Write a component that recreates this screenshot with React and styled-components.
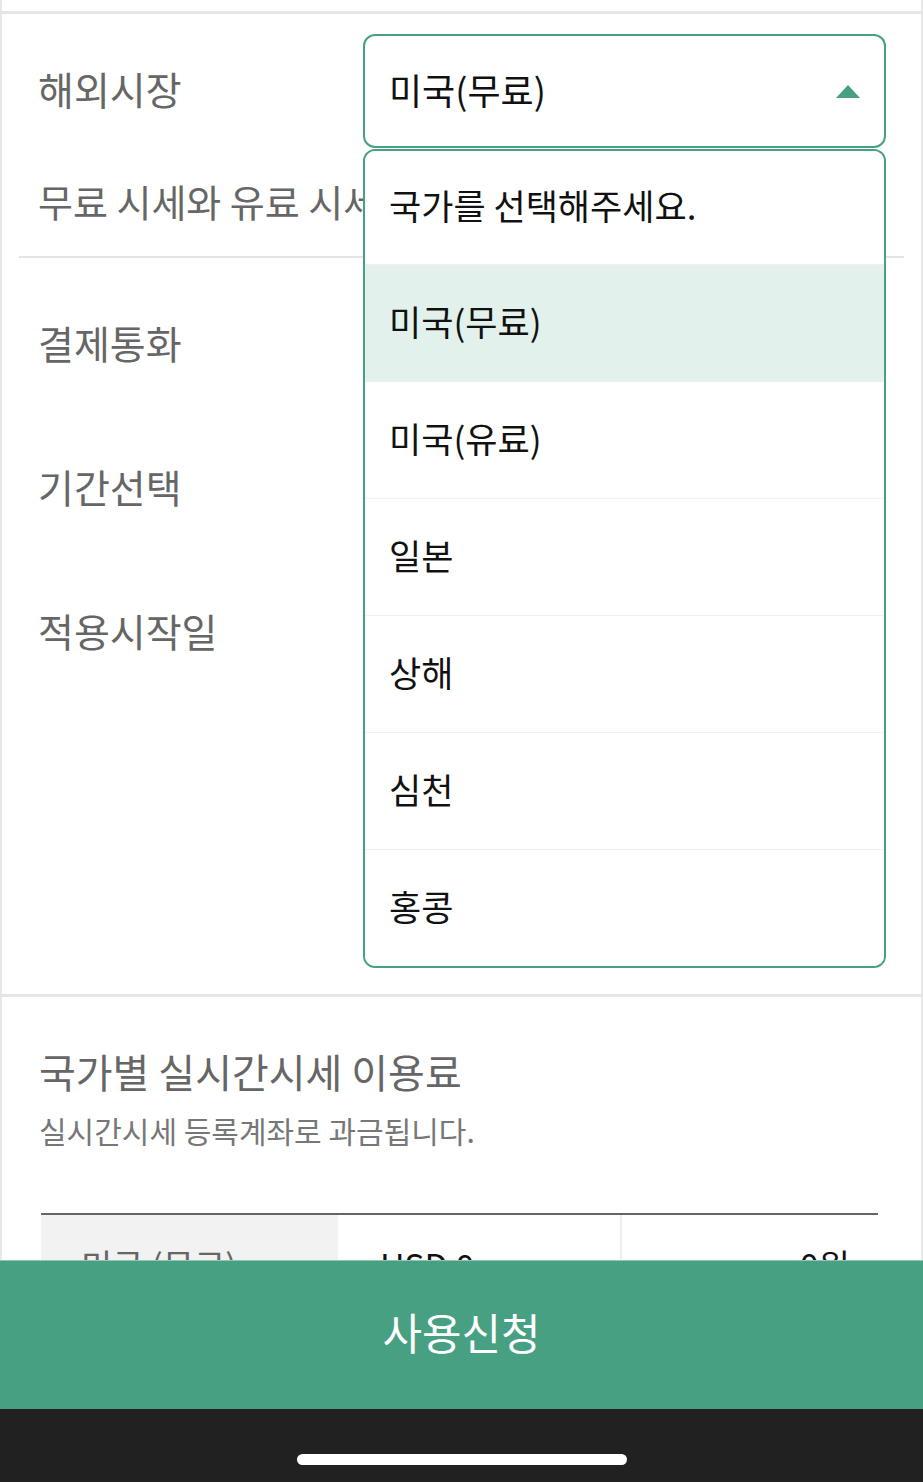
import styled, { createGlobalStyle } from "styled-components";

// Estilos globais
const GlobalStyle = createGlobalStyle`
    html, body {
        margin: 0;
        padding: 0;
        background: #fff;
    }
    body {
        font-family: "Noto Sans CJK KR", "Noto Sans", sans-serif;
        -webkit-font-smoothing: antialiased;
    }
    * { box-sizing: border-box; }
`

const GREEN = "#48a083";

const Page = styled.div`
    width: 923px;
    padding-bottom: 160px;
    border-left: 2px solid #e8e8e8;
    border-right: 2px solid #e8e8e8;
`

const TopStrip = styled.div`
    height: 11px;
`

const Divider = styled.div`
    height: 3px;
    background: #e6e6e6;
    margin: 0 -2px;
`

const FormSection = styled.section`
    position: relative;
    padding: 20px 17px 289px;
`

const Row = styled.div`
    display: flex;
    align-items: center;
    height: ${props => props.h || 144}px;
`

const Label = styled.span`
    width: 344px;
    padding: 0 0 6px 19px;
    font-size: 39px;
    color: #666;
`

// Texto cortado pela lista aberta
const Note = styled.p`
    margin: 0;
    width: 344px;
    height: 108px;
    padding: 0 0 4px 19px;
    display: flex;
    align-items: center;
    font-size: 38px;
    color: #666;
    white-space: nowrap;
    overflow: hidden;
`

const Line = styled.hr`
    margin: 0 0 15px;
    border: 0;
    height: 2px;
    background: #e4e4e4;
`

const SelectBox = styled.div`
    width: 523px;
    height: 114px;
    border: 2px solid ${GREEN};
    border-radius: 12px;
    display: flex;
    align-items: center;
    justify-content: space-between;
    padding: 0 24px 4px 24px;
    font-size: 36px;
    color: #111;
`

const Arrow = styled.span`
    width: 0;
    height: 0;
    margin-top: 4px;
    border-left: 12px solid transparent;
    border-right: 12px solid transparent;
    border-bottom: 13px solid ${GREEN};
`

const Dropdown = styled.ul`
    position: absolute;
    top: 135px;
    left: 361px;
    width: 523px;
    margin: 0;
    padding: 0;
    list-style: none;
    background: #fff;
    border: 2px solid ${GREEN};
    border-radius: 12px;
    overflow: hidden;
    z-index: 5;
`

const Option = styled.li`
    height: ${props => props.first ? 113 : 117}px;
    display: flex;
    align-items: center;
    padding: 0 0 6px 24px;
    font-size: 35px;
    color: #111;
    background: ${props => props.active ? "#e2f1ec" : "#fff"};
    border-top: ${props => props.first ? "none" : "1px solid #f0f0f0"};
`

const FeeSection = styled.section`
    padding: 45px 43px 0 37px;
`

const Title = styled.h2`
    margin: 0;
    font-size: 40px;
    line-height: 58px;
    font-weight: normal;
    color: #666;
`

const Sub = styled.p`
    margin: 9px 0 0;
    font-size: 30px;
    line-height: 43px;
    color: #777;
`

const Table = styled.div`
    margin: 61px 0 0 2px;
    border-top: 2px solid #666;
    display: grid;
    grid-template-columns: 297px 282px 1fr;
`

const Cell = styled.div`
    height: 100px;
    display: flex;
    align-items: center;
    justify-content: ${props => props.right ? "flex-end" : "flex-start"};
    padding: 0 ${props => props.right ? "28px" : "0"} 0 ${props => props.head ? "40px" : "42px"};
    background: ${props => props.head ? "#f2f2f2" : "#fff"};
    color: ${props => props.head ? "#666" : "#111"};
    border-left: ${props => props.right ? "2px solid #eee" : "none"};
    border-bottom: 1px solid #e4e4e4;
    font-size: 34px;
`

const Footer = styled.div`
    position: fixed;
    left: 0;
    right: 0;
    bottom: 0;
    z-index: 10;
`

const ApplyButton = styled.button`
    display: block;
    width: 100%;
    height: 149px;
    border: 0;
    border-top: 1px solid #8fc7b4;
    background: ${GREEN};
    color: #fff;
    font-family: inherit;
    font-size: 43px;
    padding: 0 0 8px;
`

const NavBar = styled.div`
    height: 73px;
    background: #212121;
    display: flex;
    justify-content: center;
    padding-top: 45px;
`

const HomePill = styled.div`
    width: 330px;
    height: 11px;
    border-radius: 6px;
    background: #fff;
`

const options = ["국가를 선택해주세요.", "미국(무료)", "미국(유료)", "일본", "상해", "심천", "홍콩"];

const App = () => {
    return (
        <>
            <GlobalStyle />
            <Page>
                <TopStrip />
                <Divider />
                <FormSection>
                    <Row h={114}>
                        <Label>해외시장</Label>
                        <SelectBox>
                            미국(무료)
                            <Arrow />
                        </SelectBox>
                    </Row>
                    <Note>무료 시세와 유료 시세를 선택하실 수 있습니다.</Note>
                    <Line />
                    <Row><Label>결제통화</Label></Row>
                    <Row><Label>기간선택</Label></Row>
                    <Row><Label>적용시작일</Label></Row>
                    <Dropdown>
                        {options.map((item, index) => (
                            <Option key={item} first={index === 0} active={index === 1}>{item}</Option>
                        ))}
                    </Dropdown>
                </FormSection>
                <Divider />
                <FeeSection>
                    <Title>국가별 실시간시세 이용료</Title>
                    <Sub>실시간시세 등록계좌로 과금됩니다.</Sub>
                    <Table>
                        <Cell head>미국 (무료)</Cell>
                        <Cell>USD 0</Cell>
                        <Cell right>0원</Cell>
                    </Table>
                </FeeSection>
            </Page>
            <Footer>
                <ApplyButton>사용신청</ApplyButton>
                <NavBar><HomePill /></NavBar>
            </Footer>
        </>
    )
}

export default App;
